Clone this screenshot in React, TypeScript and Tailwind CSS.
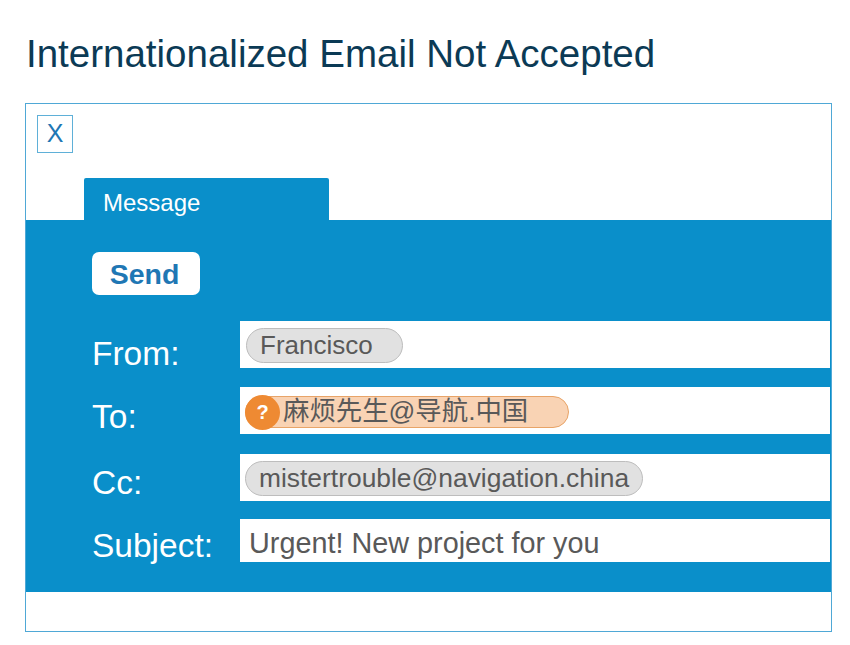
const fontStack = { fontFamily: '"Liberation Sans", "Noto Sans CJK SC", sans-serif' };

function Row({
  label,
  children,
  rowClass,
  labelClass,
}: {
  label: string;
  children: React.ReactNode;
  rowClass: string;
  labelClass: string;
}) {
  return (
    <div className={`flex ${rowClass}`}>
      <div className={`w-[148px] shrink-0 text-[33.5px] leading-[38px] text-white ${labelClass}`}>{label}</div>
      <div className="flex h-full flex-1 items-center bg-white pl-[5px]">{children}</div>
    </div>
  );
}

export default function App() {
  return (
    <div className="h-[645px] w-[850px] overflow-hidden bg-white pl-[25px]" style={fontStack}>
      <h1 className="pt-[31px] pl-[1px] text-[38.5px] leading-[46px] font-normal text-[#0b3a55]">
        Internationalized Email Not Accepted
      </h1>

      <div className="mt-[26px] h-[529px] w-[807px] border border-solid border-[#4fa8d6]">
        <div className="pt-[11px] pl-[11px]">
          <div className="flex h-[38px] w-[36px] items-center justify-center border border-[#5fb0d8] text-[25px] text-[#1f77b4]">
            X
          </div>
        </div>

        <div className="mt-[25px] ml-[58px] h-[42px] w-[245px] rounded-t-[2px] bg-[#0a8fca] pt-[9px] pl-[19px] text-[24px] leading-[32px] text-white">
          Message
        </div>

        <div className="h-[372px] bg-[#0a8fca] pt-[32px] pr-[1px] pl-[66px]">
          <div className="flex h-[43px] w-[108px] items-center justify-center rounded-[7px] bg-white pt-[2px] pr-[3px] text-[28.5px] font-bold text-[#1f77b4]">
            Send
          </div>

          <div className="mt-[26px] flex flex-col">
            <Row label="From:" rowClass="h-[47px]" labelClass="pt-[14px]">
              <span className="mt-[2px] ml-[1px] flex h-[35px] w-[157px] items-center rounded-full border border-[#bdbdbd] bg-[#e1e1e1] pl-[13px] text-[26px] text-[#595959]">
                Francisco
              </span>
            </Row>
            <Row label="To:" rowClass="mt-[19px] h-[47px]" labelClass="pt-[11px]">
              <span className="relative mt-[2px] flex h-[32px] w-[324px] items-center rounded-full border border-[#e8a468] bg-[#f9d3b4] pl-[37px] text-[26.4px] text-[#595959]">
                <span className="absolute top-[-2px] left-[-1px] flex h-[35px] w-[35px] items-center justify-center rounded-full bg-[#ee8a33] text-[20px] font-bold text-white">
                  ?
                </span>
                麻烦先生@导航.中国
              </span>
            </Row>
            <Row label="Cc:" rowClass="mt-[20px] h-[47px]" labelClass="pt-[10px]">
              <span className="mt-[2px] flex h-[35px] w-[398px] items-center rounded-full border border-[#bdbdbd] bg-[#e1e1e1] pl-[13px] text-[26.4px] text-[#595959]">
                mistertrouble@navigation.china
              </span>
            </Row>
            <Row label="Subject:" rowClass="mt-[18px] h-[43px]" labelClass="pt-[8px]">
              <span className="pt-[6px] pl-[4px] text-[28.8px] text-[#595959]">Urgent! New project for you</span>
            </Row>
          </div>
        </div>
      </div>
    </div>
  );
}
